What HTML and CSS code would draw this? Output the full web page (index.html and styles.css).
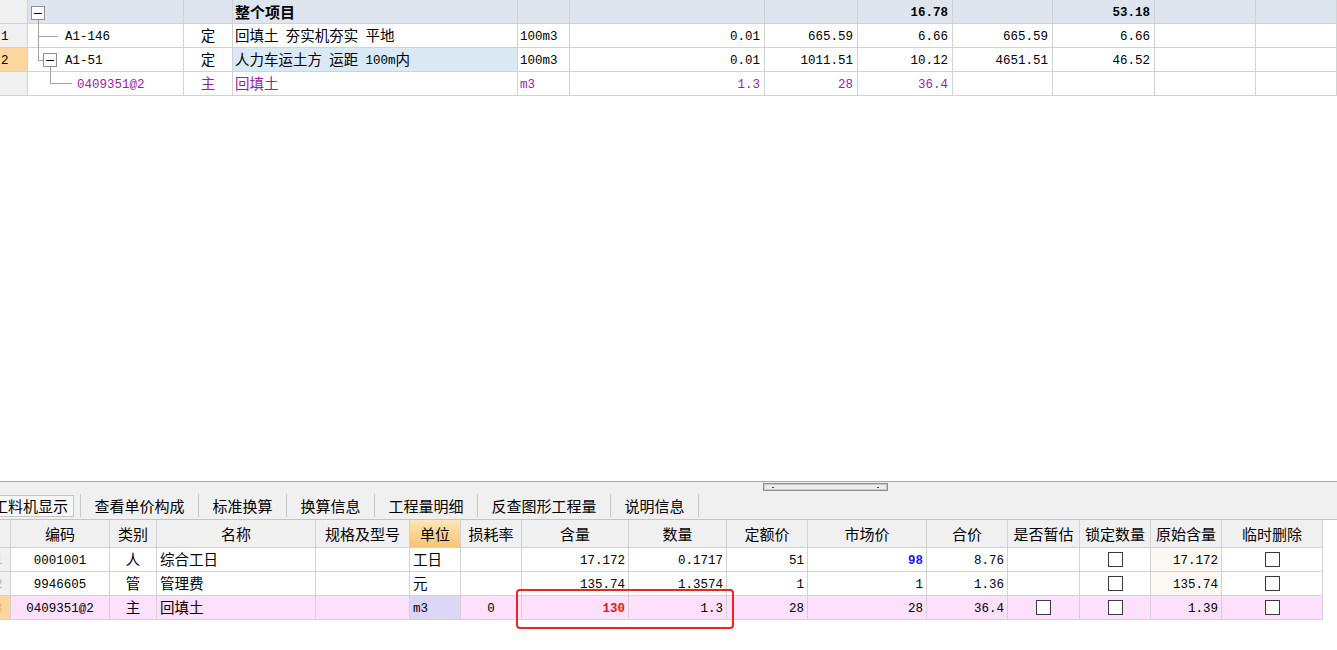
FILE: index.html
```html
<!DOCTYPE html>
<html lang="zh">
<head>
<meta charset="utf-8">
<title>工料机显示</title>
<link rel="stylesheet" href="styles.css">
</head>
<body>
<div class="upper">
  <div class="trow thead">
    <div class="c rn"></div>
    <div class="c tree"><svg width="20" height="23" class="tv"><line x1="10.5" y1="19.5" x2="10.5" y2="25" class="ln"/><rect x="3.5" y="6.5" width="13" height="13" class="bx"/><line x1="6" y1="13" x2="14" y2="13" class="mn"/></svg></div>
    <div class="c"></div>
    <div class="c b">整个项目</div>
    <div class="c"></div>
    <div class="c"></div>
    <div class="c"></div>
    <div class="c r n b">16.78</div>
    <div class="c"></div>
    <div class="c r n b">53.18</div>
    <div class="c"></div>
    <div class="c"></div>
  </div>
  <div class="trow">
    <div class="c rn">1</div>
    <div class="c tree"><svg width="37" height="23" class="tv"><line x1="10.5" y1="-1" x2="10.5" y2="25" class="ln"/><line x1="10.5" y1="12.5" x2="30" y2="12.5" class="ln"/></svg><span class="n">A1-146</span></div>
    <div class="c ctr">定</div>
    <div class="c">回填土&ensp;夯实机夯实&ensp;平地</div>
    <div class="c n">100m3</div>
    <div class="c r n">0.01</div>
    <div class="c r n">665.59</div>
    <div class="c r n">6.66</div>
    <div class="c r n">665.59</div>
    <div class="c r n">6.66</div>
    <div class="c"></div>
    <div class="c"></div>
  </div>
  <div class="trow">
    <div class="c rn cur">2</div>
    <div class="c tree"><svg width="37" height="23" class="tv"><line x1="10.5" y1="-1" x2="10.5" y2="12.5" class="ln"/><line x1="10.5" y1="12.5" x2="15.5" y2="12.5" class="ln"/><line x1="22.5" y1="18.5" x2="22.5" y2="25" class="ln"/><rect x="15.5" y="5.5" width="13" height="13" class="bx"/><line x1="18" y1="12" x2="26" y2="12" class="mn"/></svg><span class="n">A1-51</span></div>
    <div class="c ctr">定</div>
    <div class="c sel">人力车运土方&ensp;运距&ensp;<span class="n">100m</span>内</div>
    <div class="c n">100m3</div>
    <div class="c r n">0.01</div>
    <div class="c r n">1011.51</div>
    <div class="c r n">10.12</div>
    <div class="c r n">4651.51</div>
    <div class="c r n">46.52</div>
    <div class="c"></div>
    <div class="c"></div>
  </div>
  <div class="trow purple">
    <div class="c rn"></div>
    <div class="c tree"><svg width="49" height="23" class="tv"><line x1="22.5" y1="-1" x2="22.5" y2="11.5" class="ln"/><line x1="22.5" y1="11.5" x2="44" y2="11.5" class="ln"/></svg><span class="n">0409351@2</span></div>
    <div class="c ctr">主</div>
    <div class="c">回填土</div>
    <div class="c n">m3</div>
    <div class="c r n">1.3</div>
    <div class="c r n">28</div>
    <div class="c r n">36.4</div>
    <div class="c"></div>
    <div class="c"></div>
    <div class="c"></div>
    <div class="c"></div>
  </div>
</div>

<div class="panel">
  <div class="splitbar">
    <div class="grip"><span class="dot"></span><span class="dot"></span></div>
  </div>
  <div class="tabs">
    <div class="tab sel-tab">工料机显示</div>
    <div class="sep"></div>
    <div class="tab">查看单价构成</div>
    <div class="sep"></div>
    <div class="tab">标准换算</div>
    <div class="sep"></div>
    <div class="tab">换算信息</div>
    <div class="sep"></div>
    <div class="tab">工程量明细</div>
    <div class="sep"></div>
    <div class="tab">反查图形工程量</div>
    <div class="sep"></div>
    <div class="tab">说明信息</div>
    <div class="sep"></div>
  </div>
  <div class="lower">
    <div class="btable">
      <div class="brow bhead">
        <div class="c rn"></div>
        <div class="c ctr">编码</div>
        <div class="c ctr">类别</div>
        <div class="c ctr">名称</div>
        <div class="c ctr">规格及型号</div>
        <div class="c ctr unit-h">单位</div>
        <div class="c ctr">损耗率</div>
        <div class="c ctr">含量</div>
        <div class="c ctr">数量</div>
        <div class="c ctr">定额价</div>
        <div class="c ctr">市场价</div>
        <div class="c ctr">合价</div>
        <div class="c ctr">是否暂估</div>
        <div class="c ctr">锁定数量</div>
        <div class="c ctr">原始含量</div>
        <div class="c ctr">临时删除</div>
      </div>
      <div class="brow">
        <div class="c rn"><span class="clip">1</span></div>
        <div class="c ctr n">0001001</div>
        <div class="c ctr">人</div>
        <div class="c">综合工日</div>
        <div class="c"></div>
        <div class="c">工日</div>
        <div class="c"></div>
        <div class="c r n">17.172</div>
        <div class="c r n">0.1717</div>
        <div class="c r n">51</div>
        <div class="c r n blue">98</div>
        <div class="c r n">8.76</div>
        <div class="c"></div>
        <div class="c ctr"><span class="cb"></span></div>
        <div class="c r n orig">17.172</div>
        <div class="c ctr"><span class="cb"></span></div>
      </div>
      <div class="brow">
        <div class="c rn"><span class="clip">2</span></div>
        <div class="c ctr n">9946605</div>
        <div class="c ctr">管</div>
        <div class="c">管理费</div>
        <div class="c"></div>
        <div class="c">元</div>
        <div class="c"></div>
        <div class="c r n">135.74</div>
        <div class="c r n">1.3574</div>
        <div class="c r n">1</div>
        <div class="c r n">1</div>
        <div class="c r n">1.36</div>
        <div class="c"></div>
        <div class="c ctr"><span class="cb"></span></div>
        <div class="c r n orig">135.74</div>
        <div class="c ctr"><span class="cb"></span></div>
      </div>
      <div class="brow pink">
        <div class="c rn cur"><span class="clip">3</span></div>
        <div class="c ctr n">0409351@2</div>
        <div class="c ctr">主</div>
        <div class="c">回填土</div>
        <div class="c"></div>
        <div class="c n unit-sel">m3</div>
        <div class="c ctr n">0</div>
        <div class="c r n red">130</div>
        <div class="c r n">1.3</div>
        <div class="c r n">28</div>
        <div class="c r n">28</div>
        <div class="c r n">36.4</div>
        <div class="c ctr"><span class="cb"></span></div>
        <div class="c ctr"><span class="cb"></span></div>
        <div class="c r n">1.39</div>
        <div class="c ctr"><span class="cb"></span></div>
      </div>
      <div class="mark"></div>
    </div>
  </div>
</div>
</body>
</html>
```

FILE: styles.css
```css
* {
  box-sizing: border-box;
  margin: 0;
  padding: 0;
}

html, body {
  width: 1337px;
  height: 650px;
  overflow: hidden;
  background: #ffffff;
}

body {
  font-family: "Noto Sans CJK SC", "Noto Sans", sans-serif;
  font-size: 14.5px;
  color: #000;
}

/* ---------- upper grid ---------- */
.upper {
  height: 481px;
  background: #fff;
}

.trow {
  display: grid;
  grid-template-columns: 28px 156px 49px 285px 52px 195px 93px 95px 100px 102px 101px 81px;
  height: 24px;
}

.c {
  display: flex;
  align-items: center;
  padding: 0 2px;
  white-space: nowrap;
  overflow: hidden;
  border-right: 1px solid #d2d2d2;
  border-bottom: 1px solid #d2d2d2;
  line-height: 1;
}

.c.r {
  justify-content: flex-end;
  padding-right: 4px;
}

.c.ctr {
  justify-content: center;
}

.n {
  font-family: "Liberation Mono", "DejaVu Sans Mono", monospace;
  font-size: 12.5px;
}

.b {
  font-weight: bold;
  font-size: 15px;
}

.n.b {
  font-size: 12.5px;
}

.thead .c {
  background: #dee5ef;
}

.rn {
  background: #f0f0f0;
  font-family: "Liberation Mono", monospace;
  font-size: 12.5px;
  padding-left: 1px;
}

.thead .c.rn {
  background: #f0f0f0;
}

.rn.cur {
  background: #fbd79f;
}

.sel {
  background: #dae9f6;
}

.purple .c {
  color: #9a1e9e;
}

.tree {
  padding: 0;
  overflow: visible;
}

.tv {
  flex: none;
  overflow: visible;
  shape-rendering: crispEdges;
}

.ln {
  stroke: #a3a3a3;
  stroke-width: 1;
}

.bx {
  fill: #fff;
  stroke: #8f8f8f;
  stroke-width: 1;
}

.mn {
  stroke: #000;
  stroke-width: 1;
}

/* ---------- lower panel ---------- */
.panel {
  height: 169px;
  background: #f0f0f0;
  border-top: 1px solid #a9a9a9;
  display: flex;
  flex-direction: column;
}

.splitbar {
  height: 10px;
  padding: 1px 0 0 763px;
}

.grip {
  width: 125px;
  height: 8px;
  border: 1px solid #8d8d8d;
  box-shadow: inset 0 0 0 1px #c9c9c9;
  background: #ececec;
  display: flex;
  justify-content: space-between;
  align-items: center;
  padding: 0 8px;
}

.dot {
  width: 2px;
  height: 1px;
  background: #3434c8;
}

.tabs {
  height: 28px;
  display: flex;
  align-items: center;
  margin-left: -10px;
  border-bottom: 1px solid #c4c4c4;
  font-size: 15px;
}

.tab {
  padding: 0 13.5px;
  line-height: 22px;
  white-space: nowrap;
}

.tab.sel-tab {
  border: 1px solid #c6c6c6;
  background: #f7f7f7;
  height: 22px;
  line-height: 20px;
  padding: 0 5px 0 2px;
  margin-right: 6px;
}

.sep {
  width: 1px;
  height: 23px;
  background: #c9c9c9;
}

.lower {
  flex: 1;
  background: #fff;
}

.btable {
  position: relative;
  width: 1323px;
}

.brow {
  display: grid;
  grid-template-columns: 11px 99px 47px 159px 94px 51px 61px 107px 98px 81px 119px 81px 72px 71px 71px 101px;
  height: 24px;
}

.brow .c {
  padding: 0 3px;
}

.brow .c.r {
  padding-right: 3px;
}

.brow .c.ctr {
  padding: 0;
}

.bhead {
  height: 28px;
}

.bhead .c {
  background: #f0f0f0;
  font-size: 15px;
}

.bhead .c.unit-h {
  background: linear-gradient(#fde6b8, #f5c470);
}

.brow .c.rn {
  padding: 0;
  color: #b0b0b0;
}

.clip {
  margin-left: -5px;
}

.pink .c {
  background: #fde0fb;
}

.pink .c.rn {
  background: #fbd79f;
  color: #e9b56a;
}

.pink .c.unit-sel {
  background: #dcd7f7;
}

.orig {
  background: #fdf9f2;
}

.blue {
  color: #1a1ae6;
  font-weight: bold;
}

.red {
  color: #f01414;
  font-weight: bold;
}

.cb {
  display: inline-block;
  width: 15px;
  height: 15px;
  border: 1px solid #3a3a3a;
  background: #fff;
}

.mark {
  position: absolute;
  left: 516px;
  top: 69px;
  width: 218px;
  height: 40px;
  border: 2.5px solid #e8251f;
  border-radius: 4px;
}

/* mono text sits a little lower, as in the reference */
.trow .c.n,
.brow .c.n,
.tree .n,
.sel .n,
.trow .c.rn,
.brow .c.rn {
  padding-top: 3px;
}
```
